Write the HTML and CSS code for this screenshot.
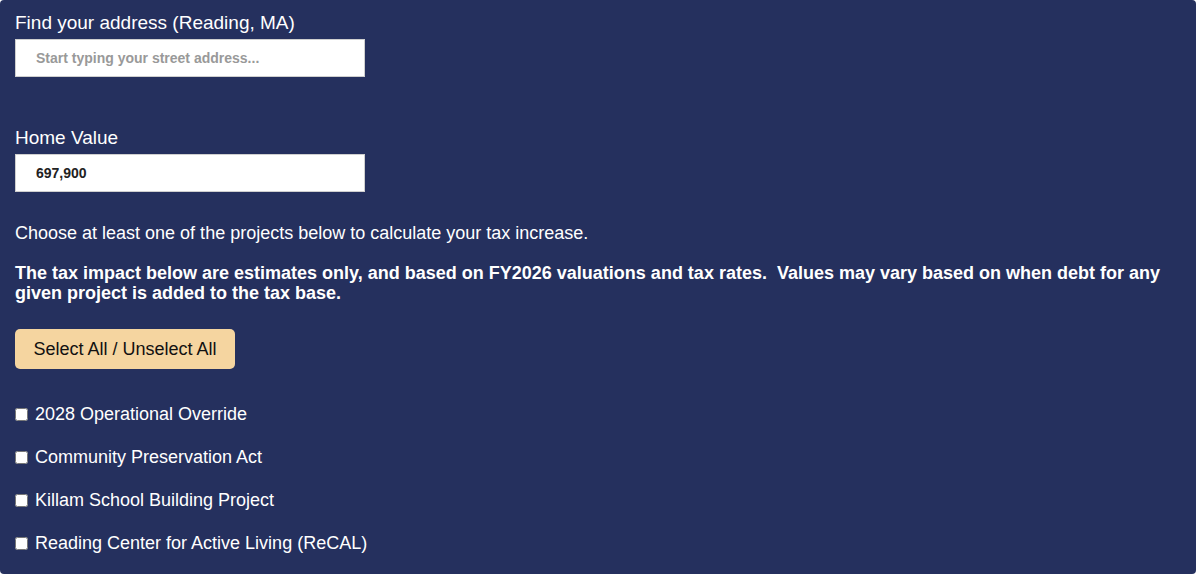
FILE: index.html
```html
<!DOCTYPE html>
<html>
<head>
<meta charset="utf-8">
<link rel="stylesheet" href="styles.css">
</head>
<body>
<div class="panel">
  <div class="field">
    <label class="label">Find your address (Reading, MA)</label>
    <input class="input" type="text" placeholder="Start typing your street address...">
  </div>
  <div class="field field-home">
    <label class="label">Home Value</label>
    <input class="input value" type="text" value="697,900">
  </div>
  <p class="note">Choose at least one of the projects below to calculate your tax increase.</p>
  <p class="note bold">The tax impact below are estimates only, and based on FY2026 valuations and tax rates.&nbsp; Values may vary based on when debt for any given project is added to the tax base.</p>
  <button class="btn">Select All / Unselect All</button>
  <ul class="projects">
    <li><label><input type="checkbox"> 2028 Operational Override</label></li>
    <li><label><input type="checkbox"> Community Preservation Act</label></li>
    <li><label><input type="checkbox"> Killam School Building Project</label></li>
    <li><label><input type="checkbox"> Reading Center for Active Living (ReCAL)</label></li>
  </ul>
</div>
</body>
</html>
```
FILE: styles.css
```css
html, body {
  margin: 0;
  padding: 0;
  background: #ffffff;
}
body {
  font-family: "Liberation Sans", Arial, sans-serif;
  width: 1196px;
  height: 574px;
  overflow: hidden;
}
.panel {
  background: #25305e;
  color: #ffffff;
  border-radius: 4px;
  padding: 6px 15px 0 15px;
  height: 574px;
  box-sizing: border-box;
}
.field {
  display: flex;
  flex-direction: column;
  align-items: flex-start;
}
.field-home {
  margin-top: 44px;
}
.label {
  font-size: 19px;
  line-height: 33px;
}
.input {
  width: 350px;
  height: 38px;
  box-sizing: border-box;
  border: 1px solid #cfcfcf;
  background: #ffffff;
  padding: 0 20px;
  font-family: "Liberation Sans", Arial, sans-serif;
  font-size: 14px;
  font-weight: bold;
  color: #222222;
  outline: none;
  margin: 0;
}
.input::placeholder {
  color: #999999;
}
.note {
  font-size: 18px;
  line-height: 22px;
  margin: 30px 0 0 0;
}
.note.bold {
  font-weight: bold;
  line-height: 20px;
  margin-top: 19px;
}
.btn {
  margin-top: 26px;
  background: #f5d5a0;
  border: none;
  border-radius: 5px;
  width: 220px;
  height: 40px;
  font-family: "Liberation Sans", Arial, sans-serif;
  font-size: 18px;
  color: #111111;
  padding: 0;
}
.projects {
  list-style: none;
  margin: 35px 0 0 0;
  padding: 0;
  display: flex;
  flex-direction: column;
  gap: 23px;
}
.projects li {
  font-size: 18px;
  line-height: 20px;
}
.projects label {
  display: flex;
  align-items: center;
  gap: 7px;
}
.projects input {
  margin: 0;
  width: 13px;
  height: 13px;
}
```
